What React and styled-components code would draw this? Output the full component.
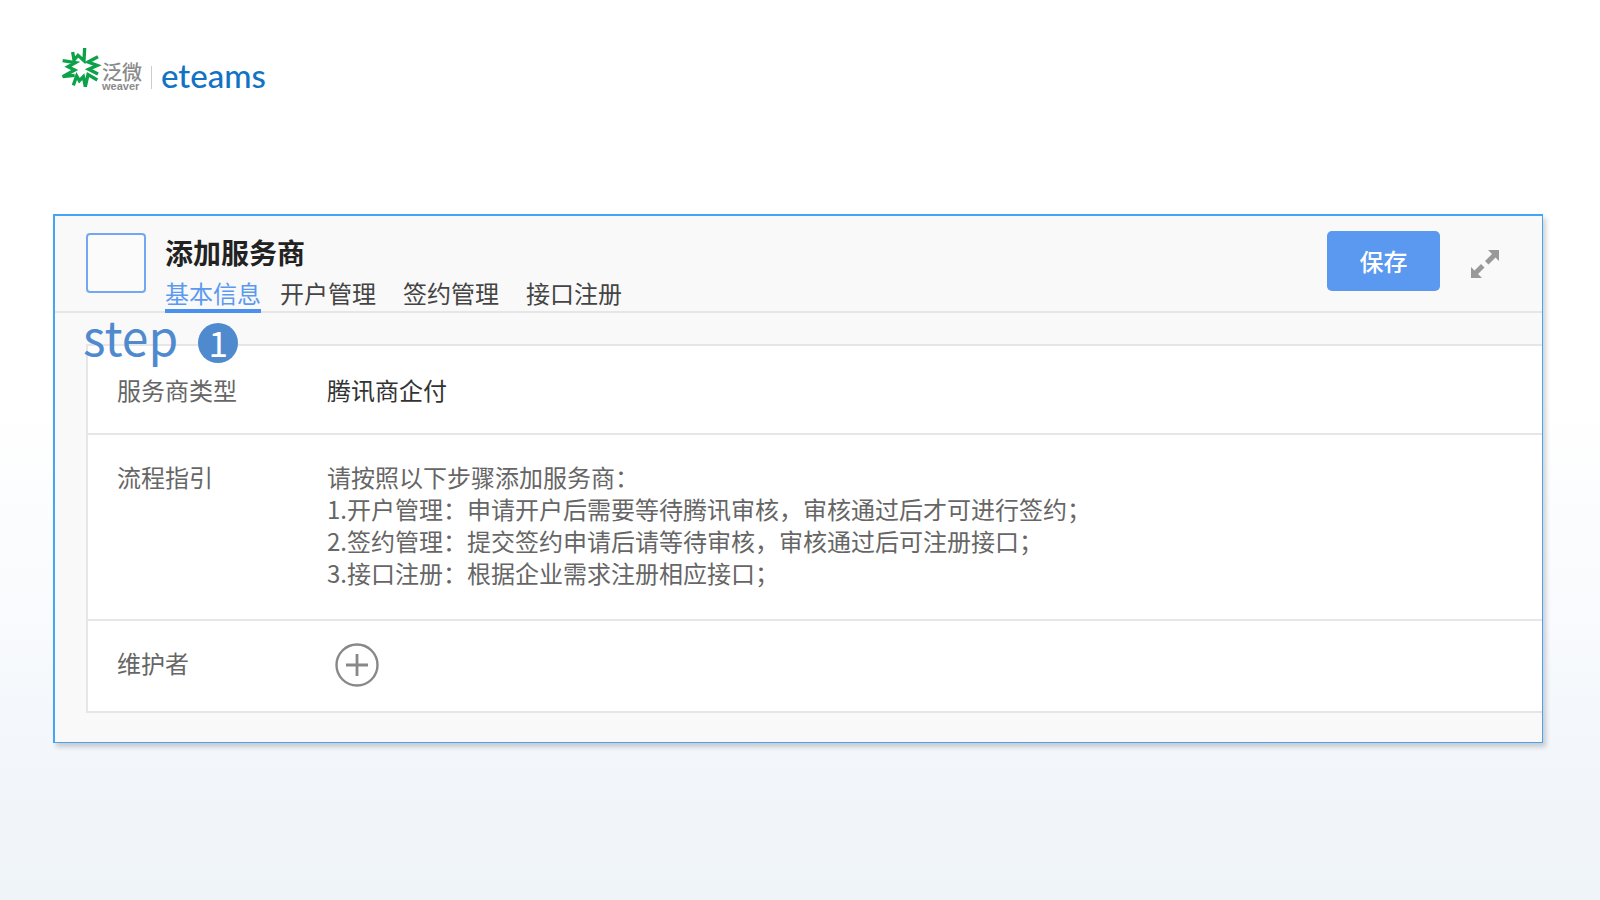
import React, { useState } from "react";
import styled, { createGlobalStyle } from "styled-components";

const GlobalStyle = createGlobalStyle`
  * {
    box-sizing: border-box;
  }
  body {
    margin: 0;
    min-height: 100vh;
    font-family: "Noto Sans CJK SC", "Noto Sans", sans-serif;
    background: linear-gradient(to bottom, #fff 0%, #fff 45%, #f8fafd 70%, #f2f6fa 86%, #eff4f8 100%);
  }
`;

const Page = styled.div`
  padding: 46px 57px 40px 53px;
`;

const Brand = styled.header`
  display: flex;
  height: 48px;
  padding-left: 7px;
  margin-bottom: 120px;
`;

const BrandMark = styled.svg`
  width: 42px;
  height: 44px;
`;

const BrandName = styled.div`
  display: flex;
  flex-direction: column;
  padding-top: 16px;
  color: #8a8a8a;
  font-size: 20px;
  font-weight: 500;
  line-height: 20px;
`;

const BrandLatin = styled.span`
  font-family: "Liberation Sans", sans-serif;
  font-size: 11px;
  font-weight: 700;
  line-height: 8px;
`;

const BrandDivider = styled.div`
  width: 1px;
  height: 23px;
  margin: 20px 9px 0;
  background: #ccc;
`;

const BrandProduct = styled.div`
  padding-top: 11px;
  color: #1272c4;
  font-family: Lato, sans-serif;
  font-size: 33px;
  font-weight: 500;
  line-height: 36px;
`;

const Panel = styled.main`
  position: relative;
  border: 1px solid #42a5f5;
  border-width: 2px 1px 1px 2px;
  background: #f9f9f9;
  box-shadow: 3px 4px 5px rgba(0, 0, 0, 0.18);
`;

const PanelHeader = styled.div`
  display: flex;
  align-items: flex-start;
  height: 97px;
  padding: 15px 40px 0 31px;
  border-bottom: 2px solid #e6e6e6;
`;

const Avatar = styled.div`
  width: 60px;
  height: 60px;
  margin: 2px 19px 0 0;
  border: 2px solid #74a7f2;
  border-radius: 4px;
  background: #fbfbfb;
`;

const Heading = styled.div`
  flex: 1;
`;

const Title = styled.h1`
  margin: 3px 0 7px;
  color: #222;
  font-size: 28px;
  font-weight: 700;
  line-height: 36px;
`;

const Tabs = styled.nav`
  display: flex;
  gap: 27px;
`;

const Tab = styled.a`
  height: 36px;
  margin-right: ${({ $active }) => ($active ? "-8px" : "0")};
  border-bottom: 4px solid ${({ $active }) => ($active ? "#4a90ee" : "transparent")};
  color: ${({ $active }) => ($active ? "#5c9af2" : "#444")};
  font-size: 24px;
  line-height: 32px;
  text-decoration: none;
`;

const SaveButton = styled.button`
  width: 113px;
  height: 60px;
  padding: 0 0 2px;
  border: none;
  border-radius: 5px;
  background: #5a99ef;
  color: #fff;
  font-family: inherit;
  font-size: 24px;
  font-weight: 500;
  cursor: pointer;
`;

const IconButton = styled.button`
  display: flex;
  margin: 16px 0 0 28px;
  padding: 0;
  border: none;
  background: none;
  color: #999;
  cursor: pointer;
`;

const Step = styled.div`
  position: absolute;
  top: 91px;
  left: 28px;
  display: flex;
  align-items: center;
  color: #4f8acf;
  font-size: 48px;
  line-height: 56px;
`;

const StepNumber = styled.span`
  width: 40px;
  height: 40px;
  margin: 16px 0 0 20px;
  border-radius: 50%;
  background: #4f8acf;
  color: #fff;
  font-size: 35px;
  line-height: 38px;
  text-align: center;
`;

const Details = styled.dl`
  margin: 31px 0 29px 31px;
  border: 2px solid #e6e6e6;
  border-right: none;
  background: #fff;
`;

const DetailRow = styled.div`
  display: flex;
  padding: 28px 0 27px 29px;
  font-size: 24px;
  line-height: 32px;

  & + & {
    padding-top: 26px;
    padding-bottom: 30px;
    border-top: 2px solid #e6e6e6;
  }
`;

const Label = styled.dt`
  width: 210px;
  color: #666;
`;

const Value = styled.dd`
  margin: 0;
  color: ${({ $strong }) => ($strong ? "#333" : "#666")};
`;

const AddButton = styled.button`
  display: flex;
  margin: -4px 0 -6px 8px;
  padding: 0;
  border: none;
  background: none;
  color: #888;
  cursor: pointer;
`;

const tabs = ["基本信息", "开户管理", "签约管理", "接口注册"];

const guide = [
  "请按照以下步骤添加服务商：",
  "1.开户管理：申请开户后需要等待腾讯审核，审核通过后才可进行签约；",
  "2.签约管理：提交签约申请后请等待审核，审核通过后可注册接口；",
  "3.接口注册：根据企业需求注册相应接口；",
];

export default function App() {
  const [active, setActive] = useState(tabs[0]);

  return (
    <>
      <GlobalStyle />
      <Page>
        <Brand>
          <BrandMark viewBox="0 0 126 132" fill="none" stroke="#0da24a" strokeWidth="10">
            <path d="M38 18L42 42L54 28L72 44L74 6" />
            <path d="M114 32L84 48L112 58L86 70L114 84" />
            <path d="M112 102L84 86L76 122L70 92L58 104L50 90L40 118" />
            <path d="M8 44L46 50L24 62L44 72L8 92L44 88" />
          </BrandMark>
          <BrandName>
            泛微
            <BrandLatin>weaver</BrandLatin>
          </BrandName>
          <BrandDivider />
          <BrandProduct>eteams</BrandProduct>
        </Brand>
        <Panel>
          <PanelHeader>
            <Avatar />
            <Heading>
              <Title>添加服务商</Title>
              <Tabs>
                {tabs.map((tab) => (
                  <Tab key={tab} href="#" $active={tab === active} onClick={() => setActive(tab)}>
                    {tab}
                  </Tab>
                ))}
              </Tabs>
            </Heading>
            <SaveButton type="button">保存</SaveButton>
            <IconButton type="button" aria-label="全屏">
              <svg width="34" height="34" viewBox="0 0 34 34" fill="currentColor">
                <path d="M20 3H31V14L27.500 10.500L20.500 17.500L17 14L24 7Z" />
                <path d="M3 20L6.500 23.500L13 17L16.500 20.500L10 27L14 31H3Z" />
              </svg>
            </IconButton>
          </PanelHeader>
          <Step>
            step
            <StepNumber>1</StepNumber>
          </Step>
          <Details>
            <DetailRow>
              <Label>服务商类型</Label>
              <Value $strong>腾讯商企付</Value>
            </DetailRow>
            <DetailRow>
              <Label>流程指引</Label>
              <Value>
                {guide.map((line) => (
                  <div key={line}>{line}</div>
                ))}
              </Value>
            </DetailRow>
            <DetailRow>
              <Label>维护者</Label>
              <Value>
                <AddButton type="button" aria-label="添加维护者">
                  <svg width="44" height="44" viewBox="0 0 44 44" fill="none" stroke="currentColor">
                    <circle cx="22" cy="22" r="20.500" strokeWidth="2.400" />
                    <path d="M11 22H33M22 11V33" strokeWidth="2.800" />
                  </svg>
                </AddButton>
              </Value>
            </DetailRow>
          </Details>
        </Panel>
      </Page>
    </>
  );
}
